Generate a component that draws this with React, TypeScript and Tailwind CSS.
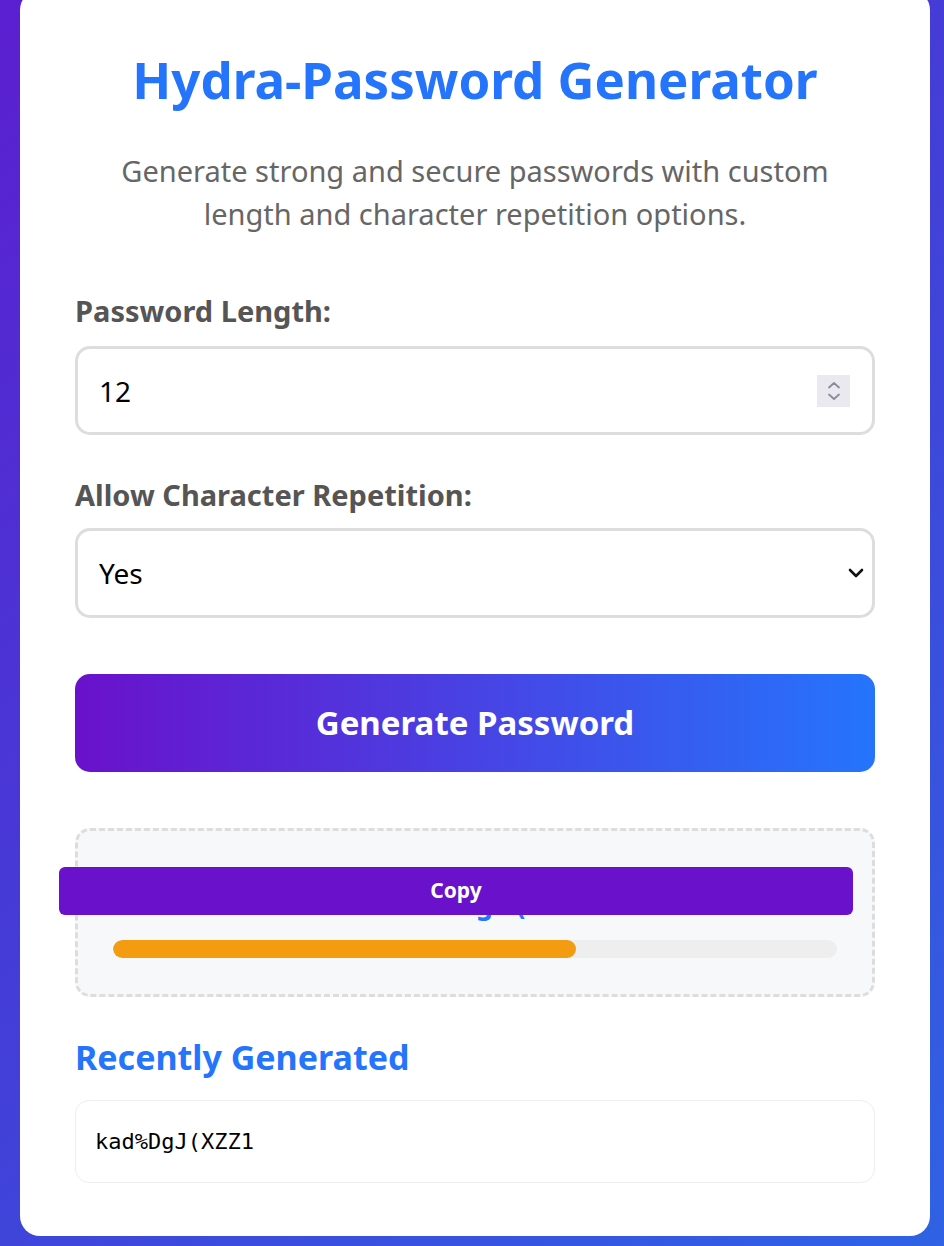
import React from "react";

function Spinner() {
  return (
    <div className="w-[33px] h-[32px] bg-[#e9e9ef] flex flex-col items-center justify-center gap-[4px]">
      <svg width="14" height="8" viewBox="0 0 14 8" fill="none">
        <path d="M2 6.5 L7 2 L12 6.5" stroke="#8b8b99" strokeWidth="1.8" strokeLinecap="round" strokeLinejoin="round" />
      </svg>
      <svg width="14" height="8" viewBox="0 0 14 8" fill="none">
        <path d="M2 1.5 L7 6 L12 1.5" stroke="#8b8b99" strokeWidth="1.8" strokeLinecap="round" strokeLinejoin="round" />
      </svg>
    </div>
  );
}

function App() {
  const password = "kad%DgJ(XZZ1";
  const strength = 64;

  return (
    <div className="w-full h-[1246px] overflow-hidden bg-[linear-gradient(135deg,#5b1fd0_0%,#4240d8_50%,#2f62e4_100%)] font-['Noto_Sans',sans-serif]">
      <div className="-mt-[10px] ml-[20px] w-[910px] h-[1246px] bg-white rounded-[20px] px-[55px] pt-[51px]">
        <h1 className="text-center text-[51px] leading-[76px] font-bold text-[#2575fc]">
          Hydra-Password Generator
        </h1>
        <p className="mt-[32px] text-center text-[29px] leading-[43px] text-[#666]">
          Generate strong and secure passwords with custom
          <br />
          length and character repetition options.
        </p>

        <label className="block mt-[56px] text-[29px] leading-[40px] font-bold text-[#555]">
          Password Length:
        </label>
        <div className="mt-[15px] h-[89px] border-[3px] border-[#ddd] rounded-[15px] flex items-center justify-between pl-[21px] pr-[22px]">
          <span className="text-[28px] text-black">12</span>
          <Spinner />
        </div>

        <label className="block mt-[40px] text-[29px] leading-[40px] font-bold text-[#555]">
          Allow Character Repetition:
        </label>
        <div className="mt-[13px] h-[90px] border-[3px] border-[#ddd] rounded-[15px] flex items-center justify-between pl-[21px] pr-[8px]">
          <span className="text-[28px] text-black">Yes</span>
          <svg width="16" height="10" viewBox="0 0 16 10" fill="none">
            <path d="M2 2 L8 8 L14 2" stroke="#111" strokeWidth="2.6" strokeLinecap="round" strokeLinejoin="round" />
          </svg>
        </div>

        <button
          type="button"
          className="mt-[56px] w-full h-[98px] rounded-[15px] bg-[linear-gradient(90deg,#6a11cb,#2575fc)] text-white text-[33px] font-bold"
        >
          Generate Password
        </button>

        <div className="relative mt-[56px] h-[169px] border-[3px] border-dashed border-[#ddd] rounded-[15px] bg-[#f7f8fa] px-[35px] pt-[54px]">
          <div className="pl-[36px] text-center text-[30px] leading-[40px] font-bold text-[#2575fc] font-['DejaVu_Sans_Mono',monospace]">
            {password}
          </div>
          <button
            type="button"
            className="absolute left-[-19px] top-[36px] w-[794px] h-[48px] rounded-[6px] bg-[#6a11cb] text-white text-[21px] font-bold"
          >
            Copy
          </button>
          <div className="mt-[15px] h-[18px] rounded-full bg-[#eee] overflow-hidden">
            <div className="h-full rounded-full bg-[#f39c12]" style={{ width: `${strength}%` }} />
          </div>
        </div>

        <h2 className="mt-[38px] text-[34px] leading-[44px] font-bold text-[#2575fc]">
          Recently Generated
        </h2>
        <div className="mt-[21px] h-[83px] border border-[#eee] rounded-[14px] flex items-center px-[19px]">
          <span className="text-[22px] text-black font-['DejaVu_Sans_Mono',monospace]">{password}</span>
        </div>
      </div>
    </div>
  );
}

export default App;
